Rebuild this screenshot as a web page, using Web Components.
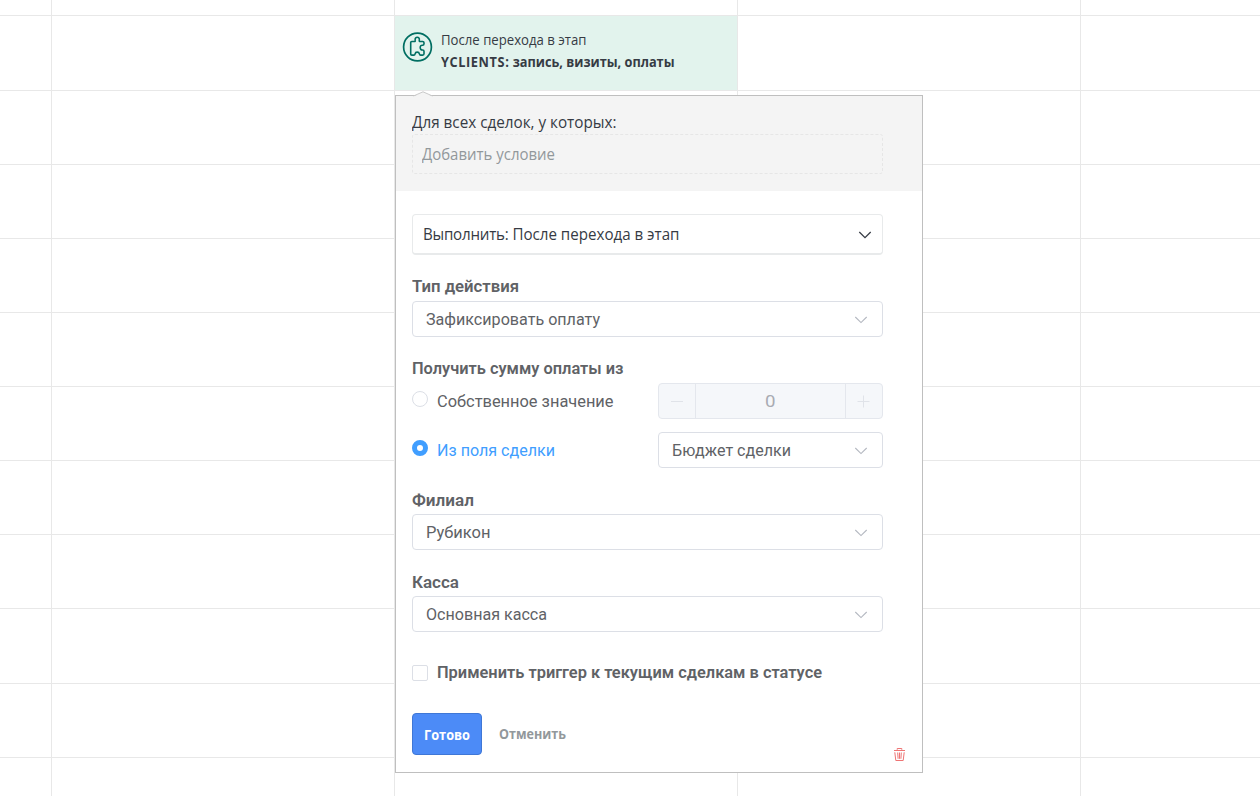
<!DOCTYPE html>
<html lang="ru">
<head>
<meta charset="utf-8">
<title>YCLIENTS</title>
<style>
html,body{margin:0;height:100%;overflow:hidden;background:#fff}
body{font-family:"Open Sans","Noto Sans",sans-serif;color:#363b44}
.brand{letter-spacing:.7px}
</style>
</head>
<body>
<pipeline-board>
  <trigger-card><fit-text slot="title" w="145.5" size="15">После перехода в этап</fit-text><fit-text slot="name" w="233.5" size="15" bold><span class="brand">YCLIENTS:</span> запись, визиты, оплаты</fit-text></trigger-card>
  <trigger-popup></trigger-popup>
</pipeline-board>
<script>
const define = (name, html, setup) => {
  const t = document.createElement('template');
  t.innerHTML = html;
  customElements.define(name, class extends HTMLElement {
    connectedCallback() {
      if (this.shadowRoot) return;
      this.attachShadow({mode: 'open'}).append(t.content.cloneNode(true));
      if (setup) setup(this, this.shadowRoot);
    }
  });
};

/* One line of text set to an exact measure */
define('fit-text', `<style>
:host{display:block;height:20px;line-height:20px;white-space:nowrap;flex:none;text-align:left}
:host([ui]){font-family:Roboto,sans-serif;color:#606266}
span{display:inline-block;transform-origin:0 50%}
</style><span><slot></slot></span>`, (el, root) => {
  const w = +el.getAttribute('w'), s = root.querySelector('span');
  el.style.width = w + 'px';
  el.style.fontSize = (el.getAttribute('size') || 16) + 'px';
  if (el.hasAttribute('bold')) el.style.fontWeight = el.getAttribute('bold') || 700;
  s.style.transform = 'scaleX(' + w / s.getBoundingClientRect().width + ')';
});

/* Empty board cells with the card and popup laid over them */
define('pipeline-board', `<style>
:host{display:block;position:relative;width:1260px;height:796px;overflow:hidden}
.grid{display:grid;width:1262px;height:798px;grid-template-columns:52px 343px 343px 343px 1fr;grid-template-rows:16px 75px 74px 74px 74px 74px 74px 74px 74px 75px 74px 1fr}
i{border-right:1px solid #e8e8e8;border-bottom:1px solid #e8e8e8}
</style><div class="grid"></div><slot></slot>`, (el, root) => {
  root.querySelector('.grid').innerHTML = '<i></i>'.repeat(60);
});

define('trigger-card', `<style>
:host{position:absolute;left:395px;top:16px;width:342px;height:74px;background:#e2f3ed;display:flex;box-sizing:border-box;padding:13px 0 0 7px;gap:8px}
svg{flex:none;margin-top:2px}
.t{display:flex;flex-direction:column;gap:2px}
</style>
<svg width="31" height="32" viewBox="0 0 31 32" fill="none" stroke="#006e62" stroke-width="1.7"><circle cx="15.5" cy="16" r="13.9"/><path stroke-width="1.6" stroke-linejoin="round" d="M8.7 11.6Q8.7 10.5 9.8 10.5H12.3Q13.6 10.5 13.2 9.2C12.3 5.3 18.2 5.3 17.3 9.2Q17 10.5 18.2 10.5H20.6Q22 10.5 22 11.8V12.8Q22 14.2 20.6 14.2C17.4 13.8 17.4 19.4 20.6 19Q22 19 22 20.3V22.8Q22 24.1 20.7 24.1H18.7Q17.6 24.1 17.4 22.9C16.9 20.5 13.5 20.5 13.1 22.9Q12.9 24.1 11.8 24.1H9.9Q8.7 24.1 8.7 22.9Z"/></svg>
<div class="t"><slot name="title"></slot><slot name="name"></slot></div>`);

define('el-select', `<style>
:host{display:flex;justify-content:space-between;align-items:center;box-sizing:border-box;height:36px;border:1px solid #dcdfe6;border-radius:4px;padding:0 14px 0 13px;background:#fff;color:#606266}
:host([main]){height:41px;border-color:#e8eaeb;border-bottom-width:2px;border-radius:4px;padding:0 10px 0 9.5px;color:#363b44}
::slotted([ui]){margin-top:2px}
svg{fill:none;stroke:#b4b8c0;stroke-width:1.1;margin-top:1px}
:host([main]) svg{stroke:#363b44;stroke-width:1.3}
</style><slot></slot><svg width="14" height="10" viewBox="0 0 14 10"><path d="M1.3 2 7 7.6 12.7 2"/></svg>`);

define('el-radio', `<style>
:host{display:flex;gap:9px;height:36px;align-items:center;flex:1}
b{width:16px;height:16px;border:1px solid #dcdfe6;border-radius:50%;box-sizing:border-box;flex:none;margin-bottom:4px}
:host([checked]) b{border:5px solid #409eff;background:#fff}
::slotted(*){color:#606266;margin-top:2px}
:host([checked]) ::slotted(*){color:#409eff!important}
</style><b></b><slot></slot>`);

define('el-number', `<style>
:host{display:grid;grid-template-columns:36px 1fr 36px;box-sizing:border-box;width:225px;height:36px;border:1px solid #e4e7ed;border-radius:4px;background:#f5f7fa;align-items:stretch}
div{display:flex;align-items:center;justify-content:center}
.v{border-left:1px solid #e4e7ed;border-right:1px solid #e4e7ed}
.v ::slotted(*){color:#a8abb2!important;margin-top:1px}
svg{stroke:#e0e3e9;stroke-width:1}
</style><div><svg width="14" height="14"><path d="M1 7.5h12"/></svg></div><div class="v"><slot></slot></div><div><svg width="14" height="14"><path d="M.5 7.5h12M6.5 1.5v12"/></svg></div>`);

define('form-field', `<style>
:host{display:block;margin-bottom:19px;padding-top:3px}
.l{height:24px;display:flex}
:host([low]) .l{box-sizing:border-box;padding-top:1px}
</style><div class="l"><slot name="label"></slot></div><slot></slot>`);

define('trigger-popup', `<style>
:host{position:absolute;left:395px;top:95px;width:528px;height:678px;box-sizing:border-box;border:1px solid #bfbfbf;background:#fff}
.arrow{position:absolute;left:17px;top:-5px}
header{height:95px;background:#f4f4f4;box-sizing:border-box;padding:16px 39px 0 16px}
.add{height:40px;box-sizing:border-box;border:1px dashed #e6e6e6;border-radius:3px;display:flex;align-items:center;padding-left:9px;margin-top:2px}
.add fit-text{color:#92989b}
main{padding:23px 39px 0 16px}
.first{margin-bottom:19px}
.verb{letter-spacing:-.25px}
.row{display:flex;justify-content:space-between;height:36px;margin-bottom:13px}
.row el-select{width:225px}
.sum{margin-bottom:0}
.row:last-child{margin-bottom:0}
.check{display:flex;gap:9px;margin-top:31px;height:20px;align-items:center}
.check b{width:16px;height:16px;box-sizing:border-box;border:1px solid #dcdfe6;border-radius:2px}
footer{display:flex;gap:17px;margin-top:30px;align-items:center}
button{width:70px;height:42px;margin:0;border:1px solid #3f77d6;border-radius:4px;background:#4c8bf7;padding:0;color:#fff;font:inherit;display:flex;align-items:center;justify-content:center}
.cancel{color:#92989b;margin-bottom:2px}
.trash{display:block;margin:-8px -23px 0 auto}
</style>
<svg class="arrow" width="20" height="6"><path d="M.5 5.5 10 .8 19.5 5.5V6H.5Z" fill="#f4f4f4"/><path d="M.5 5 10 .8 19.5 5" fill="none" stroke="#c8c8c8"/></svg>
<header><fit-text w="204.5" size="17">Для всех сделок, у которых:</fit-text>
<div class="add"><fit-text w="133" size="17">Добавить условие</fit-text></div></header>
<main>
<el-select main class="first"><fit-text w="256.5" size="17"><span class="verb">Выполнить:</span> После перехода в этап</fit-text></el-select>
<form-field><fit-text slot="label" ui bold="600" w="107">Тип действия</fit-text><el-select><fit-text ui w="174">Зафиксировать оплату</fit-text></el-select></form-field>
<form-field><fit-text slot="label" ui bold="600" w="211.5">Получить сумму оплаты из</fit-text>
<div class="row"><el-radio><fit-text ui w="176.5">Собственное значение</fit-text></el-radio><el-number><fit-text ui w="10.5">0</fit-text></el-number></div>
<div class="row"><el-radio checked><fit-text ui w="118">Из поля сделки</fit-text></el-radio><el-select><fit-text ui w="119">Бюджет сделки</fit-text></el-select></div></form-field>
<form-field low><fit-text slot="label" ui bold="600" w="62">Филиал</fit-text><el-select><fit-text ui w="64.5">Рубикон</fit-text></el-select></form-field>
<form-field low class="sum"><fit-text slot="label" ui bold="600" w="47">Касса</fit-text><el-select><fit-text ui w="121">Основная касса</fit-text></el-select></form-field>
<div class="check"><b></b><fit-text ui bold="600" w="385">Применить триггер к текущим сделкам в статусе</fit-text></div>
<footer><button><fit-text w="46" size="15" bold>Готово</fit-text></button><fit-text class="cancel" w="67" size="15" bold>Отменить</fit-text></footer>
<svg class="trash" width="13" height="15" viewBox="0 0 13 15" fill="none" stroke="#ee7474"><path d="M1 3.5h11M4.2 2.8V1.5h4.6v1.3M1.8 5.3l1 8.2h7.4l1-8.2M4.7 5.5l.4 6.3M6.5 5.5v6.3M8.3 5.5l-.4 6.3"/></svg>
</main>`);
</script>
</body>
</html>
